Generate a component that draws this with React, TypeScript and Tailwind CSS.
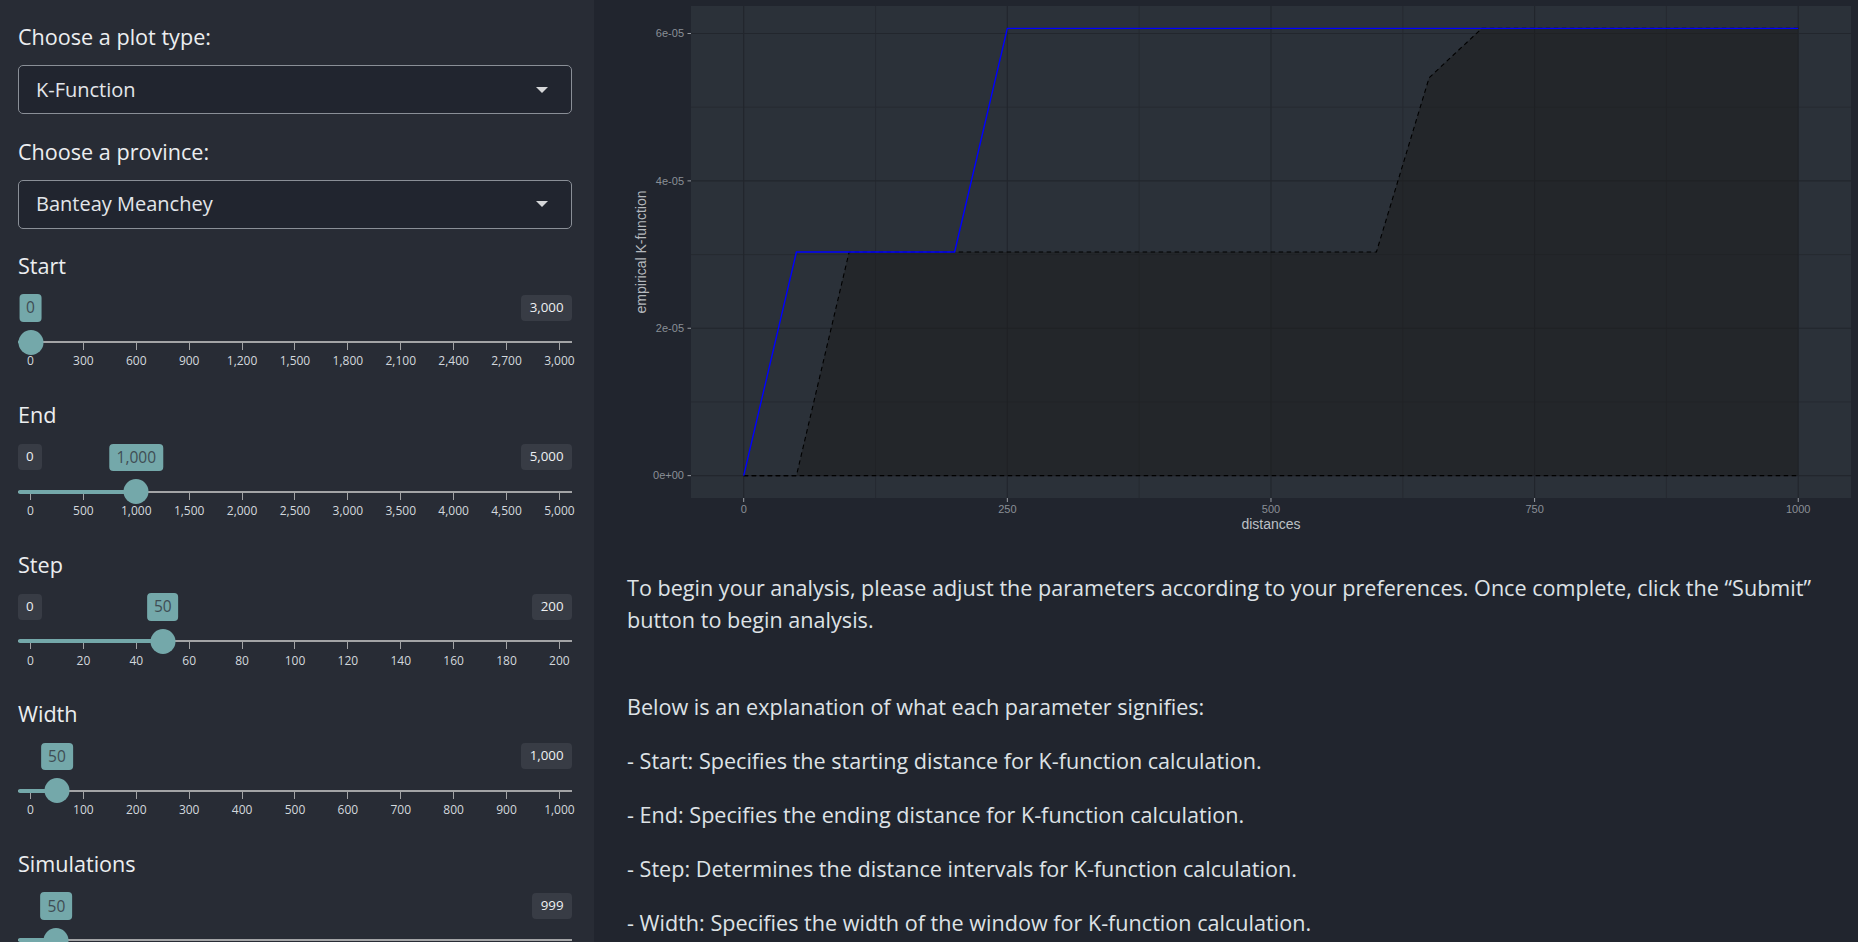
import React from 'react';

const FONT = "font-['Open_Sans',_'Noto_Sans',_sans-serif]";

type SliderProps = {
  label: string;
  min: number;
  max: number;
  value: number;
  ticks?: string[];
  showMin?: boolean;
};

// handle travels between 12.5px and 541.5px of the 554px track
const TRACK_PAD = 12.5;
const TRACK_SPAN = 529;

function fmt(n: number) {
  return n.toLocaleString('en-US');
}

function Slider({ label, min, max, value, ticks = [], showMin = true }: SliderProps) {
  const cx = TRACK_PAD + ((value - min) / (max - min)) * TRACK_SPAN;

  return (
    <div className="flex h-[149.6px] shrink-0 flex-col">
      <div className="text-[21.6px] leading-[32.4px] text-[#eceef0]">{label}</div>

      {/* min / value / max */}
      <div className="relative mt-[12px] flex h-[27.5px] items-start justify-between pt-[0.5px]">
        {showMin ? (
          <span className="flex h-[26px] items-center rounded-[4px] bg-[#383c45] px-[8px] text-[13.3px] text-[#eef0f2]">
            {fmt(min)}
          </span>
        ) : (
          <span />
        )}
        <span className="flex h-[26px] items-center rounded-[4px] bg-[#383c45] px-[8.5px] text-[13.3px] text-[#eef0f2]">
          {fmt(max)}
        </span>
        <span
          className="absolute top-0 flex h-[27.5px] -translate-x-1/2 items-center rounded-[4px] bg-[#74a8aa] px-[7px] text-[15.5px] text-[#3f4d54]"
          style={{ left: cx }}
        >
          {fmt(value)}
        </span>
      </div>

      {/* track */}
      <div className="relative mt-[19.5px] h-[2px] shrink-0 bg-[#a3a4a6]">
        <div className="absolute left-0 top-[-1px] h-[4px] rounded-l-[2px] bg-[#74a8aa]" style={{ width: cx }} />
        <div
          className="absolute top-[-11.5px] h-[25px] w-[25px] -translate-x-1/2 rounded-full bg-[#74a8aa]"
          style={{ left: cx }}
        />
      </div>

      {/* grid */}
      <div className="flex justify-between px-[12.5px]">
        {ticks.map((t, i) => (
          <div key={t + i} className="flex w-0 flex-col items-center">
            <div className="h-[7px] w-px shrink-0 bg-[#a3a4a6]" />
            <div className="mt-[3.4px] whitespace-nowrap text-[12px] leading-[16px] text-[#d3d8dd]">{t}</div>
          </div>
        ))}
      </div>
    </div>
  );
}

function SelectBox({ label, value }: { label: string; value: string }) {
  return (
    <div className="mb-[20.8px] flex shrink-0 flex-col gap-[11.6px]">
      <div className="pt-[1px] text-[21.6px] leading-[32.4px] text-[#eceef0]">{label}</div>
      <div className="flex h-[49px] items-center justify-between rounded-[5px] border border-[#8a8f97] bg-[#21252f] pl-[17px] pr-[23px] text-[20px] text-[#e3e6ea]">
        <span>{value}</span>
        <span className="h-0 w-0 border-x-[6px] border-t-[6px] border-x-transparent border-t-[#d6d7d9]" />
      </div>
    </div>
  );
}

const range = (a: number, b: number, n: number) =>
  Array.from({ length: n + 1 }, (_, i) => fmt(Math.round(a + ((b - a) * i) / n)));

// chart scales (svg coords)
const sx = (v: number) => 116.7 + v * 1.05454;
const sy = (v: number) => 498 - (v + 0.3035) * 73.69; // v in units of 1e-5

const pts = (arr: [number, number][]) => arr.map(([x, y]) => `${sx(x)},${sy(y)}`).join(' ');

const OBS: [number, number][] = [[0, 0], [50, 3.035], [200, 3.035], [250, 6.07], [1000, 6.07]];
const HI: [number, number][] = [[0, 0], [50, 0], [100, 3.035], [600, 3.035], [650, 5.4], [700, 6.07], [1000, 6.07]];
const LO: [number, number][] = [[0, 0], [1000, 0]];

function KPlot() {
  const xMajor = [0, 250, 500, 750, 1000];
  const xMinor = [125, 375, 625, 875];
  const yMajor = [0, 2, 4, 6];
  const yMinor = [1, 3, 5];
  const yLabels = ['0e+00', '2e-05', '4e-05', '6e-05'];

  return (
    <svg width="1231" height="545" className="block shrink-0 font-['Liberation_Sans',_Arial,_sans-serif]">
      <rect x="64" y="6" width="1160" height="492" fill="#2b3139" />
      {xMinor.map((v) => (
        <line key={'xm' + v} x1={sx(v)} x2={sx(v)} y1="6" y2="498" stroke="#262a31" strokeWidth="1" />
      ))}
      {yMinor.map((v) => (
        <line key={'ym' + v} x1="64" x2="1224" y1={sy(v)} y2={sy(v)} stroke="#262a31" strokeWidth="1" />
      ))}
      {xMajor.map((v) => (
        <line key={'xM' + v} x1={sx(v)} x2={sx(v)} y1="6" y2="498" stroke="#22262d" strokeWidth="1.2" />
      ))}
      {yMajor.map((v) => (
        <line key={'yM' + v} x1="64" x2="1224" y1={sy(v)} y2={sy(v)} stroke="#22262d" strokeWidth="1.2" />
      ))}

      <polygon points={pts([...HI, [1000, 0]])} fill="#1c1c1c" fillOpacity="0.5" />
      <polyline points={pts(HI)} fill="none" stroke="#000" strokeWidth="1.1" strokeDasharray="4.5 3.5" />
      <polyline points={pts(LO)} fill="none" stroke="#000" strokeWidth="1.1" strokeDasharray="4.5 3.5" />
      <polyline points={pts(OBS)} fill="none" stroke="#0000ff" strokeWidth="1.4" />

      {/* y axis */}
      {yMajor.map((v, i) => (
        <g key={'yt' + v}>
          <line x1="60.5" x2="64" y1={sy(v)} y2={sy(v)} stroke="#9a9ea4" strokeWidth="1" />
          <text x="57" y={sy(v) + 3.8} textAnchor="end" fontSize="11" fill="#8a8f96">
            {yLabels[i]}
          </text>
        </g>
      ))}
      {/* x axis */}
      {xMajor.map((v) => (
        <g key={'xt' + v}>
          <line x1={sx(v)} x2={sx(v)} y1="498" y2="502" stroke="#9a9ea4" strokeWidth="1" />
          <text x={sx(v)} y="513" textAnchor="middle" fontSize="11" fill="#8a8f96">
            {v}
          </text>
        </g>
      ))}
      <text x="644" y="529" textAnchor="middle" fontSize="14" fill="#bcc0c5">
        distances
      </text>
      <text x="19" y="252" textAnchor="middle" fontSize="14" fill="#b4b8bd" transform="rotate(-90 19 252)">
        empirical K-function
      </text>
    </svg>
  );
}

export default function App() {
  return (
    <div className={`flex h-screen w-full overflow-hidden ${FONT}`}>
      <aside className="flex w-[594px] shrink-0 flex-col bg-[#282c35] pl-[18px] pr-[22px] pt-[20px]">
        <SelectBox label="Choose a plot type:" value="K-Function" />
        <SelectBox label="Choose a province:" value="Banteay Meanchey" />
        <Slider label="Start" min={0} max={3000} value={0} ticks={range(0, 3000, 10)} showMin={false} />
        <Slider label="End" min={0} max={5000} value={1000} ticks={range(0, 5000, 10)} />
        <Slider label="Step" min={0} max={200} value={50} ticks={range(0, 200, 10)} />
        <Slider label="Width" min={0} max={1000} value={50} ticks={range(0, 1000, 10)} showMin={false} />
        <Slider label="Simulations" min={1} max={999} value={50} showMin={false} />
      </aside>

      <main className="flex flex-1 flex-col bg-[#21252e] pl-[33px]">
        <KPlot />
        <div className="mt-[27px] flex shrink-0 flex-col gap-[21.6px] pr-[10px] text-[21.6px] leading-[32.4px] text-[#dee2e6]">
          <p className="mb-[32.4px]">
            To begin your analysis, please adjust the parameters according to your preferences. Once complete, click
            the “Submit” button to begin analysis.
          </p>
          <p>Below is an explanation of what each parameter signifies:</p>
          <p>- Start: Specifies the starting distance for K-function calculation.</p>
          <p>- End: Specifies the ending distance for K-function calculation.</p>
          <p>- Step: Determines the distance intervals for K-function calculation.</p>
          <p>- Width: Specifies the width of the window for K-function calculation.</p>
        </div>
      </main>
    </div>
  );
}
